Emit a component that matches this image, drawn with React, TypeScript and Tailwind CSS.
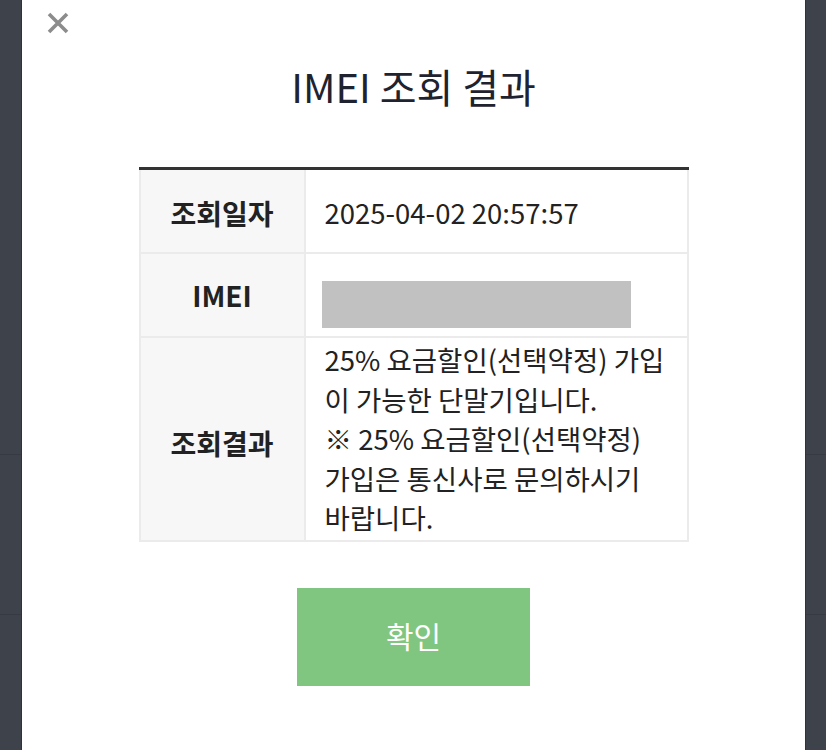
const resultLines = [
  "25% 요금할인(선택약정) 가입",
  "이 가능한 단말기입니다.",
  "※ 25% 요금할인(선택약정)",
  "가입은 통신사로 문의하시기",
  "바랍니다.",
];

export default function App() {
  return (
    <div
      className="relative h-[750px] w-[826px] overflow-hidden bg-[#3e424b]"
      style={{ fontFamily: '"Noto Sans CJK KR", "Noto Sans", sans-serif' }}
    >
      {/* page behind the dialog */}
      <div className="h-[455px] border-b border-[#373a43]" />
      <div className="h-[160px] border-b border-[#373a43]" />

      {/* dialog */}
      <div className="absolute inset-y-0 left-[22px] flex w-[783px] flex-col items-center bg-white shadow-[0_0_0_1px_#2f323a]">
        <button type="button" className="absolute left-[25px] top-[12px]">
          <svg width="22" height="22" viewBox="0 0 22 22" fill="none">
            <path d="M2 2L20 20M20 2L2 20" stroke="#8c8c8c" strokeWidth="3.6" />
          </svg>
        </button>

        <h2 className="mt-[66px] text-[40px] leading-none text-[#1f2330]">IMEI 조회 결과</h2>

        <div className="mt-[61px] w-[550px] border-t-[3px] border-[#333]">
          <div className="flex h-[84px] border-x-2 border-b-2 border-[#ebebeb]">
            <div className="flex w-[165px] items-center justify-center border-r-2 border-[#ebebeb] bg-[#f7f7f7] pt-1 text-[28px] font-bold text-[#222]">
              조회일자
            </div>
            <div className="flex flex-1 items-center pl-[19px] pt-1 text-[27.5px] text-[#222]">
              2025-04-02 20:57:57
            </div>
          </div>

          <div className="flex h-[84px] border-x-2 border-b-2 border-[#ebebeb]">
            <div className="flex w-[165px] items-center justify-center border-r-2 border-[#ebebeb] bg-[#f7f7f7] text-[28px] font-bold text-[#222]">
              IMEI
            </div>
            <div className="flex-1 pl-4 pt-[27px]">
              <div className="h-[47px] w-[309px] bg-[#c1c1c1]" />
            </div>
          </div>

          <div className="flex h-[204px] border-x-2 border-b-2 border-[#ebebeb]">
            <div className="flex w-[165px] items-center justify-center border-r-2 border-[#ebebeb] bg-[#f7f7f7] pt-2 text-[28px] font-bold text-[#222]">
              조회결과
            </div>
            <div className="flex flex-1 flex-col justify-center pl-[19px] text-[27.5px] leading-[39.5px] text-[#222]">
              {resultLines.map((line) => (
                <span key={line} className="whitespace-nowrap">
                  {line}
                </span>
              ))}
            </div>
          </div>
        </div>

        <button
          type="button"
          className="mt-[46px] h-[98px] w-[233px] bg-[#80c680] pb-1 text-[30px] text-white"
        >
          확인
        </button>
      </div>
    </div>
  );
}
